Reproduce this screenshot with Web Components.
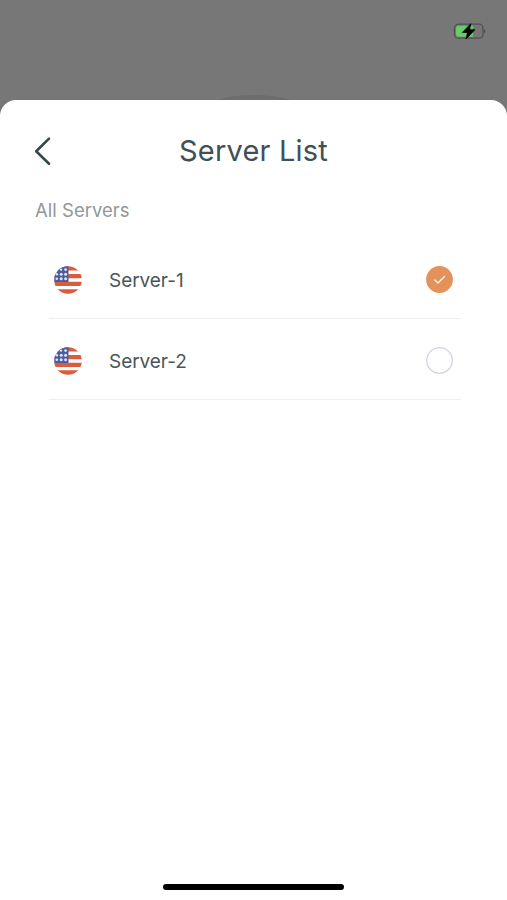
<!DOCTYPE html>
<html lang="en"><head><meta charset="utf-8"><title>Server List</title>
<style>
html,body{margin:0;height:100%;overflow:hidden;background:#777}
body{font-family:Inter,"Liberation Sans",sans-serif}
</style></head><body>
<server-app></server-app>
<script>
const define=(name,html,setup)=>customElements.define(name,class extends HTMLElement{
  constructor(){super();this.attachShadow({mode:'open'}).innerHTML=html;}
  connectedCallback(){if(setup)setup(this);}
});
define('status-bar',`<style>
:host{display:flex;justify-content:flex-end;box-sizing:border-box;height:100px;padding:20px 19px 0 0;position:relative;background:#777}
.glow{position:absolute;left:209px;top:95px;width:90px;height:24px;border-radius:50%;background:#6d6d6d}
svg{display:block}
</style><div class="glow"></div>
<svg width="36" height="22" viewBox="0 0 36 22">
<rect x="2.5" y="4.2" width="28.5" height="14" rx="4" fill="none" stroke="#505050" stroke-width="1.3"/>
<path d="M32.2 8.9q2.2 2.3 0 4.6z" fill="#484848"/>
<path d="M7 5.8h14v10.9H7q-3 0-3-3V8.8q0-3 3-3z" fill="#65cb6b"/>
<path d="M18.8 3.8 10.4 12.4h5.2l-1.6 6.6 8.8-9.2h-5.3z" fill="#000" stroke="#000" stroke-width=".9" stroke-linejoin="round"/>
</svg>`);
define('sheet-header',`<style>
:host{display:grid;grid-template-columns:34px 1fr 34px;align-items:center;height:40px;padding:0 34px}
h1{margin:0;text-align:center;font-size:29px;line-height:40px;font-weight:400;letter-spacing:.2px;color:#405056;white-space:nowrap}
svg{display:block}
</style><svg width="20" height="30" viewBox="0 0 20 30"><path d="M15 2.6 2.2 15.2 15 27.8" fill="none" stroke="#34494e" stroke-width="2.6" stroke-linecap="round" stroke-linejoin="round"/></svg>
<h1><slot></slot></h1>`);
define('us-flag',`<style>:host{display:block;width:28px;height:28px}svg{display:block}</style>
<svg width="28" height="28" viewBox="0 0 28 28"><defs><clipPath id="c"><circle cx="14" cy="14" r="13.8"/></clipPath></defs>
<g clip-path="url(#c)"><path fill="#fff" d="M0 0h28v28H0z"/><path fill="#db5c3b" d="M0 0h28v4.6H0zM0 8h28v4.3H0zM0 15.8h28v4.2H0zM0 23.3h28V28H0z"/><path fill="#4c5aa0" d="M0 0h14.5v16H0z"/>
<g fill="#e0e3f2"><circle cx="7" cy="3.6" r="1.2"/><circle cx="11.6" cy="3.6" r="1.4"/><circle cx="2.8" cy="8.2" r="1.3"/><circle cx="7.2" cy="8.2" r="1.5"/><circle cx="11.6" cy="8.2" r="1.5"/><circle cx="2.8" cy="12.8" r="1.3"/><circle cx="7.2" cy="12.8" r="1.5"/><circle cx="11.6" cy="12.8" r="1.5"/></g></g></svg>`);
define('radio-mark',`<style>
:host{display:block;width:27px;height:27px}svg{display:block}.on{display:none}
:host([checked]) .on{display:block}:host([checked]) .off{display:none}
</style><svg width="27" height="27" viewBox="0 0 27 27">
<g class="on"><circle cx="13.5" cy="13.5" r="13.4" fill="#e2935c"/><path d="m8.8 13.9 3.2 3.2 6.5-6.6" fill="none" stroke="#fff4e8" stroke-width="1.4" stroke-linecap="round" stroke-linejoin="round"/></g>
<circle class="off" cx="13.5" cy="13.5" r="12.8" fill="#fff" stroke="#d6d2e4" stroke-width="1.3"/></svg>`);
define('server-row',`<style>
:host{display:flex;align-items:center;box-sizing:border-box;height:81px;padding:4px 8px 0 5px;border-bottom:1px solid #efefef}
span{flex:1;margin:1px 0 0 27px;font-size:19px;line-height:28px;letter-spacing:-.05px;color:#4a555a}
radio-mark{margin-bottom:1px}
</style><us-flag></us-flag><span><slot></slot></span><radio-mark></radio-mark>`,
el=>el.shadowRoot.querySelector('radio-mark').toggleAttribute('checked',el.hasAttribute('checked')));
define('home-indicator',`<style>:host{display:block;width:181px;height:6px;border-radius:3px;background:#000}</style>`);
define('bottom-sheet',`<style>
:host{display:flex;flex-direction:column;box-sizing:border-box;height:800px;padding-top:31px;border-radius:16px 16px 0 0;background:#fff;position:relative}
</style><slot></slot>`);
define('server-app',`<style>
:host{display:block;width:507px;height:900px}
h2{margin:27px 0 0 35px;font-size:18.5px;line-height:24px;font-weight:400;letter-spacing:.02px;color:#929799}
.list{margin:16px 46px 0 49px}
home-indicator{margin:auto auto 10px}
</style><status-bar></status-bar><bottom-sheet><sheet-header>Server List</sheet-header><h2>All Servers</h2>
<div class="list"><server-row checked>Server-1</server-row><server-row>Server-2</server-row></div><home-indicator></home-indicator></bottom-sheet>`);
</script></body></html>
